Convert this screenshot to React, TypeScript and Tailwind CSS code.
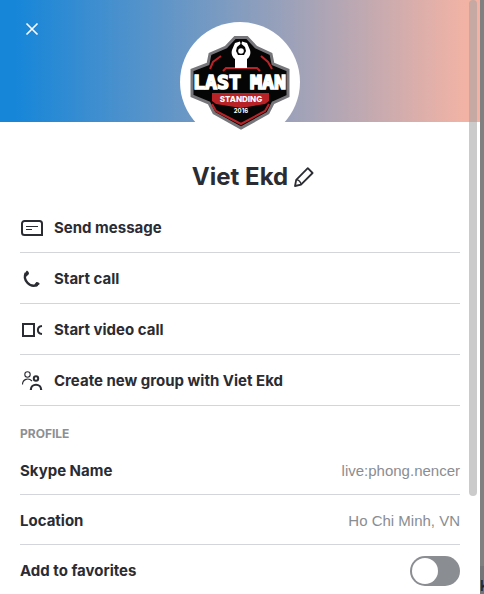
import { useState } from "react";

const actions = [
  { label: "Send message", icon: MessageIcon },
  { label: "Start call", icon: PhoneIcon },
  { label: "Start video call", icon: VideoIcon },
  { label: "Create new group with Viet Ekd", icon: GroupIcon },
];

const details = [
  { label: "Skype Name", value: "live:phong.nencer" },
  { label: "Location", value: "Ho Chi Minh, VN" },
];

function MessageIcon() {
  return (
    <svg width="24" height="24" viewBox="0 0 24 24" fill="none" stroke="currentColor" aria-hidden="true">
      <path d="M4.5 5H19.5A2.5 2.5 0 0 1 22 7.5V19H4.5A2.5 2.5 0 0 1 2 16.5V7.5A2.5 2.5 0 0 1 4.5 5Z" strokeWidth="2" />
      <path d="M6 10.5H18M6 13.5H12" strokeWidth="1" />
    </svg>
  );
}

function PhoneIcon() {
  return (
    <svg width="24" height="24" viewBox="0 0 24 24" fill="none" stroke="currentColor" aria-hidden="true">
      <path d="M5.8 6C2.5 12.5 9.5 21.5 17.5 17.8" strokeWidth="2.4" />
      <path d="M4.4 7L6.6 3.8C7.2 3.4 8 4.1 8.5 5C9.1 6.1 9.2 6.8 8.5 7.4L6.2 9.8ZM14.3 17.4L16.4 15.1C17 14.7 18 15.1 18.8 15.7C19.8 16.4 19.8 17 19.2 17.5L16.5 19.6Z" fill="currentColor" stroke="none" />
    </svg>
  );
}

function VideoIcon() {
  return (
    <svg width="24" height="24" viewBox="0 0 24 24" fill="none" stroke="currentColor" aria-hidden="true">
      <rect x="3" y="6" width="11" height="12" strokeWidth="2" />
      <path d="M22 8C16.5 8.5 16.5 15.5 22 16" strokeWidth="2" />
    </svg>
  );
}

function GroupIcon() {
  return (
    <svg width="24" height="24" viewBox="0 0 24 24" fill="none" stroke="currentColor" aria-hidden="true">
      <circle cx="7.5" cy="5.5" r="2.7" strokeWidth="1.1" />
      <path d="M2.5 15.5C2.5 10 8.5 8.5 12 12" strokeWidth="1.1" />
      <circle cx="16" cy="9.5" r="2.2" strokeWidth="2" />
      <path d="M10.8 21C10.8 14 21.2 14 21.2 21" strokeWidth="2.2" />
    </svg>
  );
}

function PencilIcon() {
  return (
    <svg width="22" height="22" viewBox="0 0 22 22" fill="none" stroke="currentColor" strokeWidth="1.8" strokeLinejoin="round" aria-hidden="true">
      <path d="M2 20L3.2 13.8L14.8 2.2L19.6 7L8 18.6Z" />
      <path d="M3.2 13.8C5.5 13.5 8.3 16.3 8 18.6" strokeWidth="1.4" />
    </svg>
  );
}

function TeamLogo() {
  return (
    <svg viewBox="0 0 120 120" className="size-full" role="img" aria-label="Last Man Standing 2016">
      <path d="M55 15.5H67L76 25L91 32L93 42L108 48V74L93 81L88 91L61 106L34 91L29 81L12 74V48L28 42L30 32L46 25Z" fill="#050505" stroke="#77777b" strokeWidth="3" />
      <path d="M30 47L33 40L41 34M92 47L88 40L81 34M43 49L46 46H77L80 49" fill="none" stroke="#b92328" strokeWidth="2" />
      <path d="M32 82L36 89L61 102L85 89L89 82" fill="none" stroke="#b92328" strokeWidth="2" />
      {/* Raised arms */}
      <path d="M55 46V37C52 35 51 31 52 28L55 21L60 19.5L60.500 22L57 25L56 29L58 33H64L66 29L65 25L61.500 22L62 19.500L67 21L70 28C71 31 70 35 67 37V46Z" fill="#fff" />
      <circle cx="61" cy="29" r="2.8" fill="#fff" />
      <path d="M32 71H89V79L85 82L61 86L36 82L32 79Z" fill="#b92328" />
      <g fill="#fff" stroke="#fff" strokeWidth="1.6" className="font-['DejaVu_Sans_Mono',monospace] text-[20px] font-bold">
        <text x="13" y="67">LAST</text>
        <text x="70" y="67">MAN</text>
      </g>
      <text x="61" y="80" textAnchor="middle" fill="#fff" className="font-['Inter',sans-serif] text-[8px] font-extrabold">STANDING</text>
      <text x="61" y="91" textAnchor="middle" fill="#fff" className="font-['Inter',sans-serif] text-[6px] font-bold">2016</text>
    </svg>
  );
}

export default function App() {
  const [favorite, setFavorite] = useState(false);

  return (
    <div className="flex h-screen overflow-hidden bg-white font-['Inter',sans-serif] text-[#2b2c33]">
      <main className="relative min-w-0 flex-1 overflow-hidden">
        {/* Banner */}
        <header className="flex h-[122px] flex-col bg-linear-to-r/srgb from-[#1686d9] from-3% to-[#f2b3a5] to-97%">
          <button type="button" aria-label="Close" className="mt-[17px] ml-5 flex size-6 shrink-0 items-center justify-center text-white">
            <svg width="14" height="14" viewBox="0 0 14 14" stroke="currentColor" strokeWidth="1.6" aria-hidden="true">
              <path d="M1.5 1.5L12.5 12.5M12.5 1.5L1.5 12.5" />
            </svg>
          </button>
        </header>

        {/* Avatar */}
        <div className="relative mx-auto -mt-[100px] size-[120px] overflow-hidden rounded-full bg-white">
          <TeamLogo />
        </div>

        <div className="mt-[21px] grid h-7 grid-cols-[1fr_auto_1fr] items-center gap-1">
          <h1 className="col-start-2 text-2xl leading-7 font-bold">Viet Ekd</h1>
          <button type="button" aria-label="Edit name" className="flex size-6 items-center justify-center">
            <PencilIcon />
          </button>
        </div>

        {/* Actions */}
        <ul className="mt-[11px] px-5">
          {actions.map(({ label, icon: Icon }) => (
            <li key={label} className="border-b border-[#d4d5d9]">
              <button type="button" className="flex h-[50px] w-full items-center gap-2.5 pt-0.5 text-left text-[15px] font-bold">
                <Icon />
                {label}
              </button>
            </li>
          ))}
        </ul>

        {/* Profile */}
        <section className="px-5">
          <h2 className="mt-5 text-xs leading-4 font-bold text-[#8d8f94]">PROFILE</h2>
          <dl className="mt-[3px]">
            {details.map(({ label, value }) => (
              <div key={label} className="flex h-[50px] items-center justify-between border-b border-[#d4d5dc] pt-1 text-[15px]">
                <dt className="font-bold">{label}</dt>
                <dd className="font-['Liberation_Sans',sans-serif] text-[#8a8d91]">{value}</dd>
              </div>
            ))}
          </dl>
          <label className="flex h-[52px] items-center justify-between text-[15px] font-bold">
            Add to favorites
            <input
              type="checkbox"
              role="switch"
              checked={favorite}
              onChange={(e) => setFavorite(e.target.checked)}
              className="h-[30px] w-[50px] appearance-none rounded-full bg-[#8a8d91] p-0.5 before:block before:size-[26px] before:rounded-full before:bg-white checked:bg-[#0078d4] checked:before:translate-x-5"
            />
          </label>
        </section>

        {/* Scroll thumb */}
        <div className="absolute top-0 right-[3px] h-[496px] w-2 rounded-full bg-[#a0a0a0]/55" />
      </main>

      {/* Edge of the window behind the panel */}
      <aside className="flex w-1 shrink-0 flex-col justify-end overflow-hidden bg-[#808080]">
        <p className="h-7 bg-[#737577] pt-2 text-[15px] leading-6 font-medium text-[#222]">k</p>
      </aside>
    </div>
  );
}
